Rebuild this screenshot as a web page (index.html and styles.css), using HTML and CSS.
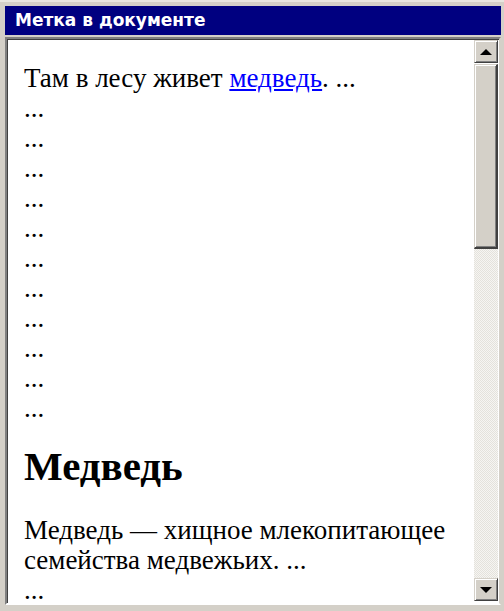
FILE: index.html
```html
<!DOCTYPE html>
<html lang="ru">
<head>
<meta charset="utf-8">
<link rel="stylesheet" href="styles.css">
</head>
<body>
<div class="window">
  <div class="title">Метка в документе</div>
  <div class="panel">
    <div class="doc">
      <p class="lead">Там в лесу живет <a href="#medved">медведь</a>. ...</p>
      <div class="dots">
        <div>...</div><div>...</div><div>...</div><div>...</div>
        <div>...</div><div>...</div><div>...</div><div>...</div>
        <div>...</div><div>...</div><div>...</div>
      </div>
      <h1 id="medved">Медведь</h1>
      <p>Медведь — хищное млекопитающее семейства медвежьих. ...</p>
      <div>...</div>
    </div>
    <div class="scrollbar">
      <div class="sb-btn up"><span class="tri-up"></span></div>
      <div class="thumb"></div>
      <div class="track"></div>
      <div class="sb-btn down"><span class="tri-down"></span></div>
    </div>
  </div>
</div>
</body>
</html>
```

FILE: styles.css
```css
html, body {
  margin: 0;
  padding: 0;
  width: 504px;
  height: 611px;
  overflow: hidden;
  background: #d4d0c8;
}
.window {
  height: 611px;
  box-sizing: border-box;
  padding: 4px 3px 0 5px;
  border-top: 2px solid #e8e6e0;
  display: flex;
  flex-direction: column;
}
.title {
  height: 29px;
  background: #000080;
  color: #fff;
  font-family: "DejaVu Sans", sans-serif;
  font-weight: bold;
  font-size: 17px;
  line-height: 28px;
  padding-left: 10px;
  flex: none;
}
.panel {
  margin-top: 2px;
  height: 568px;
  box-sizing: border-box;
  border-top: 2px solid #808080;
  border-left: 2px solid #808080;
  border-right: 2px solid #d4d0c8;
  border-bottom: 2px solid #ffffff;
  box-shadow: inset 1px 1px 0 #404040;
  background: #fff;
  display: flex;
  flex: none;
  overflow: hidden;
}
.doc {
  flex: 1;
  overflow: hidden;
  padding: 0 12px 0 17px;
  font-family: "Liberation Serif", serif;
  font-size: 27px;
  line-height: 30px;
  color: #000;
}
.doc p {
  margin: 27px 0 0 0;
}
.doc p.lead {
  margin-top: 24px;
}
.doc a {
  color: #0000ff;
  text-decoration: underline;
}
.doc h1 {
  font-size: 41px;
  line-height: 44px;
  margin: 21px 0 0 0;
}
.scrollbar {
  width: 24px;
  flex: none;
  display: flex;
  flex-direction: column;
  padding: 1px 1px 2px 0;
}
.sb-btn {
  height: 23px;
  box-sizing: border-box;
  background: #d4d0c8;
  border-top: 1px solid #d4d0c8;
  border-left: 1px solid #d4d0c8;
  border-right: 1px solid #404040;
  border-bottom: 1px solid #404040;
  box-shadow: inset 1px 1px 0 #fff, inset -1px -1px 0 #808080;
  display: flex;
  align-items: center;
  justify-content: center;
  flex: none;
}
.tri-up {
  width: 0; height: 0;
  border-left: 6px solid transparent;
  border-right: 6px solid transparent;
  border-bottom: 6px solid #000;
}
.tri-down {
  width: 0; height: 0;
  border-left: 6px solid transparent;
  border-right: 6px solid transparent;
  border-top: 6px solid #000;
}
.thumb {
  height: 185px;
  flex: none;
  margin-top: 1px;
  box-sizing: border-box;
  background: #d4d0c8;
  border-top: 1px solid #d4d0c8;
  border-left: 1px solid #d4d0c8;
  border-right: 2px solid #404040;
  border-bottom: 2px solid #404040;
  box-shadow: inset 1px 1px 0 #fff, inset -1px -1px 0 #808080;
}
.track {
  flex: 1;
  background-color: #f4f3f0;
  background-image: repeating-conic-gradient(#e4e2dc 0 25%, #f6f5f2 0 50%);
  background-size: 2px 2px;
}
```
